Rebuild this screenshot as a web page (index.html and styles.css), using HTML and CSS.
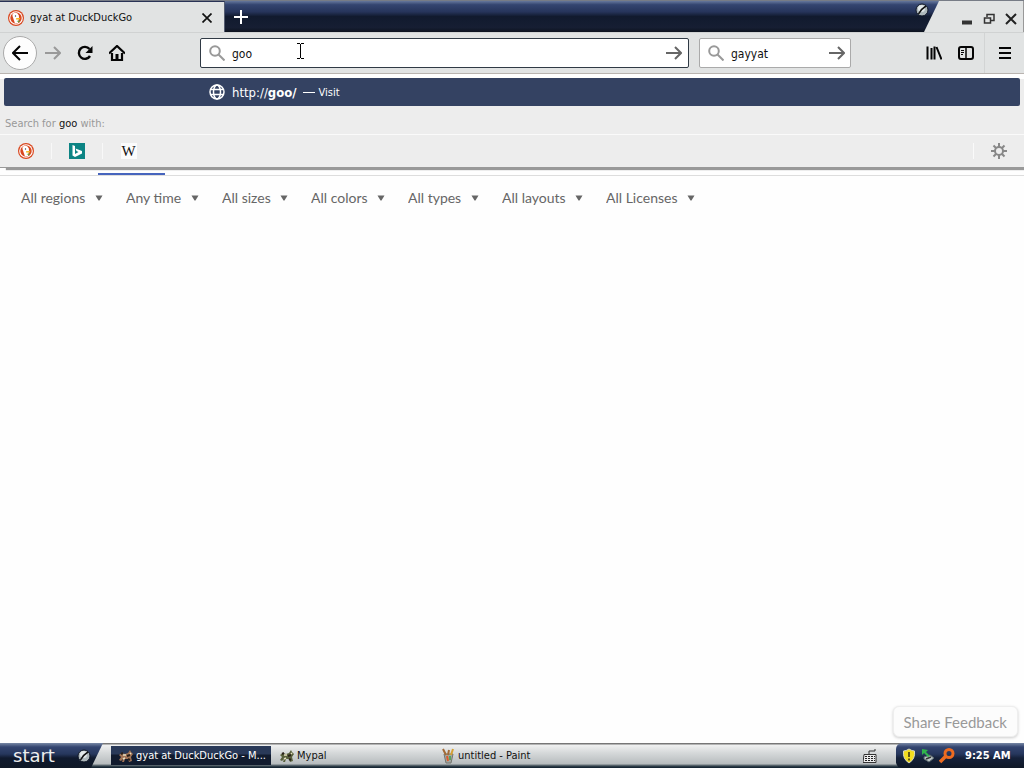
FILE: index.html
```html
<!DOCTYPE html>
<html lang="en">
<head>
<meta charset="utf-8">
<meta name="viewport" content="width=device-width, initial-scale=1">
<title>gyat at DuckDuckGo</title>
<link rel="stylesheet" href="styles.css">
</head>
<body>
<svg class="defs" aria-hidden="true">
  <symbol id="duck" viewBox="0 0 16 16">
    <circle cx="8" cy="8" r="8" fill="#d9471f"/><circle cx="8" cy="8" r="6.800" fill="#fff"/><circle cx="8" cy="8" r="5.700" fill="#d9471f"/>
    <path d="M4.500 4Q7 2 9.500 3.500 11.500 5 11 8l-1 5-3 .5Q5.500 9 4.500 6Z" fill="#fff"/><path d="M8 8.300l4.500-.6-1 1.800H8Z" fill="#f6b41c"/><circle cx="7.500" cy="6" r=".7" fill="#345"/><path d="M8.500 11l3-.6v2Z" fill="#55a83c"/>
  </symbol>
  <symbol id="search" viewBox="0 0 16 16"><circle cx="6" cy="6" r="4.800" fill="none" stroke="#999" stroke-width="2"/><path d="M9.500 9.500l6 6" stroke="#999" stroke-width="2"/></symbol>
  <symbol id="go" viewBox="0 0 16 16"><path d="M0 8h15M9 2l6 6-6 6" fill="none" stroke="#666" stroke-width="2"/></symbol>
  <symbol id="orb" viewBox="0 0 14 14"><circle cx="7" cy="7" r="6" fill="#aeb8bb" stroke="#111827" stroke-width="1"/><circle cx="6.500" cy="5.500" r="3.500" fill="#e3e9ea"/><path d="M3.500 11Q6 6 11 3" fill="none" stroke="#111" stroke-width="1.500"/></symbol>
  <symbol id="arrow" viewBox="0 0 8 6"><path d="M.5.5h7L4.500 5.500h-1Z" fill="#666"/></symbol>
  <symbol id="fox" viewBox="0 0 16 14"><path d="M1 6l3-2 3 1 3-1 2-3 1 2 2 2-2 3 1 4-3 1-1-3-3 0-1 3H4l1-3-2 2-2-1 2-3Z" fill="currentColor"/><path d="M5 6l3 0M12 4l1 1M5 10l2-1" stroke="#e6dfc2" stroke-width="1.500"/><path d="M9 7l3-1M3 5l2-1M10 10l2 1" stroke="#2a211a" stroke-width="2"/></symbol>
</svg>

<header class="titlebar">
  <div class="tab">
    <svg class="icon16"><use href="#duck"/></svg>
    <span class="tab-title">gyat at DuckDuckGo</span>
    <button class="plain" aria-label="Close tab"><svg width="10" height="10" viewBox="0 0 10 10"><path d="M.5.5l9 9M9.500.5l-9 9" stroke="#111" stroke-width="1.700"/></svg></button>
  </div>
  <div class="caption">
    <button class="plain" aria-label="New tab"><svg width="14" height="14" viewBox="0 0 14 14"><path d="M0 7h14M7 0v14" stroke="#fff" stroke-width="2"/></svg></button>
    <svg class="orb"><use href="#orb"/></svg>
  </div>
  <div class="window-buttons">
    <button class="plain" aria-label="Minimize"><svg width="12" height="12" viewBox="0 0 12 12"><path d="M1 9.500h10" stroke="#333" stroke-width="4"/></svg></button>
    <button class="plain" aria-label="Restore"><svg width="12" height="12" viewBox="0 0 12 12"><path d="M4 4V1.500h7v6H8M1.500 5h6v5h-6Z" fill="none" stroke="#333" stroke-width="1.500"/></svg></button>
    <button class="plain" aria-label="Close window"><svg width="12" height="12" viewBox="0 0 12 12"><path d="M1 1l10 10M11 1L1 11" stroke="#222" stroke-width="2"/></svg></button>
  </div>
</header>

<nav class="toolbar">
  <div class="nav-buttons">
    <button class="plain back" aria-label="Back"><svg class="icon16" viewBox="0 0 16 16"><path d="M16 8H1M8 1L1 8l7 7" fill="none" stroke="#050505" stroke-width="2"/></svg></button>
    <button class="plain" aria-label="Forward"><svg class="icon16" viewBox="0 0 16 16"><path d="M0 8h15M9 2l6 6-6 6" fill="none" stroke="#999" stroke-width="2"/></svg></button>
    <button class="plain" aria-label="Reload"><svg class="icon16" viewBox="0 0 16 16"><path d="M13 11a6 6 0 1 1-.5-7" fill="none" stroke="#050505" stroke-width="2.400"/><path d="M15.500 1v7h-7Z" fill="#050505"/></svg></button>
    <button class="plain" aria-label="Home"><svg class="icon16" viewBox="0 0 16 16"><path d="M0 8.500L8 1l8 7.500M3 8v7h10V8" fill="none" stroke="#050505" stroke-width="2.200"/><path d="M6.500 15V9h3v6Z" fill="#050505"/></svg></button>
  </div>
  <form class="field address">
    <svg class="icon16"><use href="#search"/></svg>
    <input type="text" value="goo" aria-label="Address">
    <button type="button" class="plain" aria-label="Go"><svg class="icon16"><use href="#go"/></svg></button>
    <svg class="cursor" width="7" height="16" viewBox="0 0 7 16"><path d="M0 .5h3M4 .5h3M3.500 1v14M0 15.500h3M4 15.500h3" fill="none" stroke="#000"/></svg>
  </form>
  <form class="field search">
    <svg class="icon16"><use href="#search"/></svg>
    <input type="text" value="gayyat" aria-label="Search">
    <button type="button" class="plain" aria-label="Search"><svg class="icon16"><use href="#go"/></svg></button>
  </form>
  <div class="tools">
    <button class="plain" aria-label="Library"><svg class="icon16" viewBox="0 0 16 16"><path d="M1.500 1.500v13M5.500 3v11.500M8.500 1.500v13M10.500 2l5 12.500" stroke="#050505" stroke-width="2"/></svg></button>
    <button class="plain" aria-label="Sidebar"><svg class="icon16" viewBox="0 0 16 16"><rect x="1" y="2" width="14" height="12" rx="2" fill="none" stroke="#050505" stroke-width="2"/><path d="M8 2v12" stroke="#050505" stroke-width="1.500"/><path d="M3 5.500h3M3 7.500h3M3 9.500h2" stroke="#050505"/></svg></button>
    <button class="plain menu" aria-label="Menu"><svg class="icon16" viewBox="0 0 16 16"><path d="M2 3h12M2 8h12M2 13h12" stroke="#050505" stroke-width="2"/></svg></button>
  </div>
</nav>

<main class="content">
  <section class="popup">
    <a class="result" href="#">
      <svg class="icon16" viewBox="0 0 16 16"><g fill="none" stroke="#fff" stroke-width="1.500"><circle cx="8" cy="8" r="7"/><ellipse cx="8" cy="8" rx="3.500" ry="7"/><path d="M2 5.500h12M2 10.500h12"/></g></svg>
      <span>http://<b>goo/</b></span><span class="dash"></span><span class="visit">Visit</span>
    </a>
    <p class="search-for">Search for <span>goo</span> with:</p>
    <div class="engines">
      <button class="plain engine" aria-label="DuckDuckGo"><svg class="icon16"><use href="#duck"/></svg></button>
      <button class="plain engine" aria-label="Bing"><svg class="icon16" viewBox="0 0 16 16"><path fill="#0c8484" d="M0 0h16v16H0z"/><path d="M3.500 2l2.500 1v8l3.500-2-2-1-1-2.500L13 8v2.500L6 14l-2.500-1.500Z" fill="#fff"/></svg></button>
      <button class="plain engine" aria-label="Wikipedia"><span class="wiki">W</span></button>
      <button class="plain engine settings" aria-label="Search settings"><svg class="icon16" viewBox="0 0 16 16"><g fill="none" stroke="#888"><circle cx="8" cy="8" r="4" stroke-width="2"/><path d="M8 0v4M8 12v4M0 8h4M12 8h4M2.500 2.500l2.500 2.500M11 11l2.500 2.500M13.500 2.500L11 5M5 11l-2.500 2.500" stroke-width="2"/></g></svg></button>
    </div>
  </section>
  <div class="page-tabs"><span class="active-tab"></span></div>
  <div class="filters">
    <label class="filter"><select aria-label="Region"><option>All regions</option></select><svg><use href="#arrow"/></svg></label>
    <label class="filter"><select aria-label="Time"><option>Any time</option></select><svg><use href="#arrow"/></svg></label>
    <label class="filter"><select aria-label="Size"><option>All sizes</option></select><svg><use href="#arrow"/></svg></label>
    <label class="filter"><select aria-label="Color"><option>All colors</option></select><svg><use href="#arrow"/></svg></label>
    <label class="filter"><select aria-label="Type"><option>All types</option></select><svg><use href="#arrow"/></svg></label>
    <label class="filter"><select aria-label="Layout"><option>All layouts</option></select><svg><use href="#arrow"/></svg></label>
    <label class="filter"><select aria-label="License"><option>All Licenses</option></select><svg><use href="#arrow"/></svg></label>
  </div>
  <button class="feedback">Share Feedback</button>
</main>

<footer class="taskbar">
  <button class="start"><span>start</span><svg class="orb"><use href="#orb"/></svg></button>
  <div class="tasks">
    <button class="task active"><svg class="icon16 brown"><use href="#fox"/></svg><span>gyat at DuckDuckGo - M...</span></button>
    <button class="task"><svg class="icon16 olive"><use href="#fox"/></svg><span>Mypal</span></button>
    <button class="task"><svg class="icon16" viewBox="0 0 16 16"><path d="M4 6h9l-2 9H6Z" fill="#a3a8a2" stroke="#74746e"/><path d="M6 7L3 1M8 7l1-5" stroke="#a36b36" stroke-width="2"/><path d="M11 7l2-6" stroke="#d6a132" stroke-width="2"/><path d="M7 8l1 5" stroke="#dd5b2b" stroke-width="2"/><path d="M10 8v4" stroke="#58a45a" stroke-width="2"/></svg><span>untitled - Paint</span></button>
  </div>
  <button class="plain keyboard" aria-label="Keyboard"><svg width="14" height="14" viewBox="0 0 14 14"><path d="M6 5V2h6V0" fill="none" stroke="#333"/><path d="M1 5.500h12v8H0Z" fill="#eee" stroke="#333"/><path d="M2 7.500h10M2 9.500h10M2 11.500h10" stroke="#222" stroke-dasharray="2 1"/></svg></button>
  <div class="tray">
    <svg class="icon16" viewBox="0 0 16 16"><path d="M8 1q3 2 5.500 2 1 8-5.500 12Q1.500 11 2.500 3 5 3 8 1Z" fill="#f3dd20" stroke="#d7d9c0"/><path d="M8 4v5M8 10.500v2" stroke="#332e12" stroke-width="1.500"/></svg>
    <svg class="icon16" viewBox="0 0 16 16"><path d="M4 9l6-2 4 3-5 4-5-3Z" fill="#b9c3c5" stroke="#59676c"/><path d="M6 11l5-2" stroke="#333" stroke-width="1.500"/><path d="M2 1l6 1-2 2 4 4-2 1-4-4-2 2Z" fill="#31b44b"/></svg>
    <svg class="icon16" viewBox="0 0 16 16"><circle cx="10" cy="5.500" r="4" fill="none" stroke="#ed6b20" stroke-width="3"/><path d="M7 8l-6 6" stroke="#ed6b20" stroke-width="3.500"/></svg>
    <time>9:25 AM</time>
  </div>
</footer>
</body>
</html>
```
FILE: styles.css
```css
* { box-sizing: border-box; }
body { margin: 0; height: 100vh; display: flex; flex-direction: column; background: #fefefe; color: #111; font: 11px/16px "DejaVu Sans Condensed", "DejaVu Sans", sans-serif; }
button, input, select { font: inherit; color: inherit; }
svg { display: block; flex: none; }
.defs { position: absolute; width: 0; height: 0; }
.icon16 { width: 16px; height: 16px; }
.orb { width: 14px; height: 14px; }
.plain { display: flex; align-items: center; justify-content: center; padding: 0; border: 0; background: none; }

.titlebar { display: flex; height: 32px; flex: none; background: #e1e3e3; border-top: 1px solid #777c86; }
.tab { display: flex; align-items: center; gap: 6px; width: 225px; padding: 1px 12px 0 8px; border-top: 1px solid #293355; border-right: 1px solid #555d71; }
.tab-title { flex: 1; }
.caption { display: flex; flex: 1; justify-content: space-between; padding: 0 10px 0 9px; background: linear-gradient(#65779c, #344570 12%, #26345b 35%, #111a2e 50%, #161e33 85%, #0d131f); clip-path: polygon(0 0, 100% 0, calc(100% - 15px) 100%, 0 100%); }
.caption .orb { margin-top: 2px; }
.window-buttons { display: flex; align-items: center; gap: 10px; padding: 4px 6px 0 22px; border-right: 1px solid #999; }

.toolbar { display: flex; align-items: center; height: 42px; flex: none; background: #e1e3e3; border-top: 1px solid #d0d2d2; border-bottom: 1px solid #b9b4b0; }
.nav-buttons { display: flex; align-items: center; gap: 16px; width: 200px; padding-left: 3px; }
.back { width: 34px; height: 34px; margin-right: -8px; border: 1px solid #aaa; border-radius: 50%; background: #fdfdfd; }
.field { position: relative; display: flex; align-items: center; gap: 7px; height: 30px; padding: 0 6px 0 8px; background: #fff; border: 1px solid #aaa; border-radius: 2px; }
.field input { flex: 1; min-width: 0; padding: 2px 0 0; border: 0; outline: 0; background: none; font-size: 12px; }
.address { flex: 1; border-color: #303a45; }
.cursor { position: absolute; left: 96px; top: 4px; }
.search { width: 152px; margin-left: 10px; padding-right: 5px; }
.tools { display: flex; align-items: center; justify-content: flex-end; gap: 16px; width: 173px; padding-right: 11px; }
.menu { height: 40px; padding-left: 12px; margin-left: -6px; border-left: 1px solid #d2d4d4; }

.content { position: relative; flex: 1; min-height: 0; }
.popup { position: absolute; inset: 0 0 auto; padding-top: 4px; background: linear-gradient(#fff 5px, #ededed 5px); border-bottom: 1px solid #999; box-shadow: 6px 2px 1px #999; clip-path: inset(0 0 -4px 0); }
.result { display: flex; align-items: center; height: 28px; margin: 0 4px; padding-left: 205px; border-radius: 2px; background: #344262; color: #fff; font-size: 13px; text-decoration: none; }
.result .icon16 { margin-right: 7px; }
.result span { padding-top: 1px; }
.dash { width: 12px; height: 1px; margin: 0 4px 0 6px; background: #fff; }
.visit { font-size: 11px; }
.search-for { margin: 0; padding: 10px 5px 2px; border-bottom: 1px solid #fafafa; color: #999; font-size: 11px; }
.search-for span { color: #111; }
.engines { display: flex; height: 32px; align-items: center; }
.engine { width: 51px; height: 16px; border-right: 1px solid #f8f8f8; }
.engine:first-child { width: 52px; }
.engine:nth-child(3) { border: 0; }
.wiki { width: 16px; height: 16px; background: #fcfcfc; font: 15px/16px "Liberation Serif", serif; }
.settings { margin-left: auto; border-right: 0; border-left: 1px solid #fafafa; }
.page-tabs { display: flex; align-items: flex-end; height: 102px; padding-left: 98px; border-bottom: 1px solid #ddd; }
.active-tab { width: 67px; height: 2px; background: #4664bd; }
.filters { display: flex; gap: 23px; padding: 12px 21px; color: #666; font: 14px/20px Lato, sans-serif; }
.filter { display: flex; align-items: center; gap: 9px; }
.filter select { appearance: none; padding: 0; border: 0; background: none; }
.filter svg { width: 8px; height: 6px; }
.feedback { position: absolute; right: 6px; bottom: 6px; height: 31px; padding: 0 10px; border: 1px solid #eee; border-radius: 6px; background: #fcfcfc; box-shadow: 0 1px 3px #ccc; color: #999; font: 15px/20px Lato, sans-serif; }

.taskbar { display: flex; height: 25px; flex: none; background: linear-gradient(#777 1px, #f0f1f1 2px, #d5d8d9 10px, #b7bcbe 21px, #69747a 22px, #172734 24px); }
.start { display: flex; align-items: center; gap: 8px; width: 103px; padding: 0 0 0 13px; border: 0; background: linear-gradient(#7787a5, #344570 4px, #26375d 11px, #101a2e 15px, #0f1826); color: #eee; font: 18px/22px "DejaVu Sans", sans-serif; clip-path: polygon(0 0, 100% 0, calc(100% - 12px) 100%, 0 100%); }
.start span { width: 56px; text-align: left; }
.tasks { display: flex; flex: 1; min-width: 0; align-items: center; gap: 1px; padding-left: 8px; }
.task { display: flex; align-items: center; gap: 2px; width: 160px; height: 19px; padding: 0 2px 0 7px; border: 0; background: none; text-align: left; white-space: nowrap; }
.active { background: linear-gradient(#293958 8px, #111b2e 9px); color: #fff; }
.brown { color: #a27456; }
.olive { color: #59613d; }
.keyboard { width: 34px; padding-right: 18px; }
.tray { display: flex; align-items: center; gap: 3px; width: 128px; padding-left: 5px; border-radius: 6px 0 0 6px; background: linear-gradient(#7787a5, #344570 4px, #26375d 11px, #15213a 15px, #0f1826); color: #fff; }
.tray time { margin-left: 7px; font-weight: 700; }
```
